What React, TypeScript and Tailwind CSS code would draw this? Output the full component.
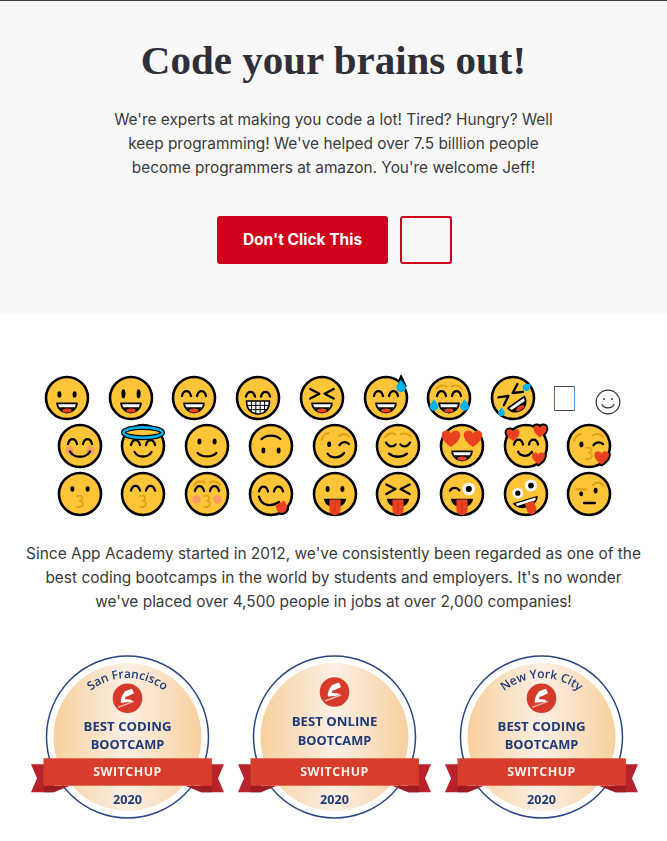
import React from 'react';

const FACE = '#FFC538';
const BROW = '#DF9F14';
const TONGUE = '#EA4220';
const CYAN = '#00B2EA';
const BLUSH = '#F79C68';
const NAVY = '#1E3A78';

const line = { fill: 'none', stroke: '#000', strokeWidth: 2.3, strokeLinecap: 'round' as const, strokeLinejoin: 'round' as const };
const brow = { fill: 'none', stroke: BROW, strokeWidth: 1.9, strokeLinecap: 'round' as const };

const HEART = 'M0 4.6C-6.5 .6-6.4-4.6-2.8-4.8-1.2-4.9-.3-3.9 0-3 .3-3.9 1.2-4.9 2.8-4.8 6.4-4.6 6.5 .6 0 4.6Z';

// emoji are drawn in px around the centre of a 48x48 box
const Emoji: React.FC<{ behind?: React.ReactNode; children?: React.ReactNode }> = ({ behind, children }) => (
  <div className="flex h-12 w-[63.7px] shrink-0 items-center justify-center">
    <svg width="48" height="48" viewBox="-24 -24 48 48" className="overflow-visible">
      {behind}
      <circle r="21" fill={FACE} stroke="#000" strokeWidth="2.6" />
      {children}
    </svg>
  </div>
);

const OpenMouth = () => (
  <g>
    <path d="M-10.8 4.6H10.8C10.8 11 5.6 15.4 0 15.4S-10.8 11-10.8 4.6Z" fill="#000" />
    <path d="M-8.8 6.2H8.8L8 9.2H-8Z" fill="#fff" />
    <ellipse cy="12.4" rx="4.6" ry="2" fill={TONGUE} />
  </g>
);

const TongueMouth = () => (
  <g>
    <path d="M-11 4.8H11C11 9 7 13.4 0 13.4S-11 9-11 4.8Z" fill="#000" />
    <path d="M-5.6 5.5H5.6V15.5C5.6 19 3 21 0 21S-5.6 19-5.6 15.5Z" fill={TONGUE} />
    <path d="M0 7V18" stroke="#C9320F" strokeWidth="1" />
  </g>
);

const ArcEyes = ({ y = -2 }: { y?: number }) => (
  <g {...line}>
    <path d={`M-12 ${y}C-10.5 ${y - 6.4}-4.5 ${y - 6.4}-3 ${y}`} />
    <path d={`M3 ${y}C4.5 ${y - 6.4} 10.5 ${y - 6.4} 12 ${y}`} />
  </g>
);

const XEyes = () => (
  <g {...line}>
    <path d="M-11.7-9-2.6-4.3-11.7 .6" />
    <path d="M11.7-9 2.6-4.3 11.7 .6" />
  </g>
);

const DotEyes = ({ y = -4.6, ry = 3, x = 7.6 }: { y?: number; ry?: number; x?: number }) => (
  <g>
    <ellipse cx={-x} cy={y} rx="2" ry={ry} />
    <ellipse cx={x} cy={y} rx="2" ry={ry} />
  </g>
);

const Brows = () => (
  <g {...brow}>
    <path d="M-13-9C-10-13-5-13.5-2.5-11.5" />
    <path d="M2.5-11.5C5-13.5 10-13 13-9" />
  </g>
);

const Smile = () => <path {...line} d="M-10 5.5C-6 12.5 6 12.5 10 5.5" />;
const Kiss = () => (
  <path d="M-3 2C3 .6 4 5.5-.4 7 4.4 7.4 4.6 13.6-3 13" fill="none" stroke={BROW} strokeWidth="1.7" strokeLinecap="round" strokeLinejoin="round" />
);
const Blush = ({ y = 5 }: { y?: number }) => (
  <g fill={BLUSH}>
    <circle cx="-10.5" cy={y} r="4.2" />
    <circle cx="10.5" cy={y} r="4.2" />
  </g>
);
const Heart = ({ x, y, s }: { x: number; y: number; s: number }) => (
  <path d={HEART} fill={TONGUE} transform={`translate(${x} ${y}) scale(${s})`} />
);
const HeartBack = ({ x, y, s }: { x: number; y: number; s: number }) => (
  <path d={HEART} fill="#000" stroke="#000" strokeWidth={3.6 / s} strokeLinejoin="round" transform={`translate(${x} ${y}) scale(${s})`} />
);
const Tear = ({ x, y, r = 4.6 }: { x: number; y: number; r?: number }) => (
  <path d={`M${x} ${y - r * 1.5}C${x + r * 0.5} ${y - r * 0.6} ${x + r} ${y - r * 0.3} ${x + r} ${y + r * 0.2}A${r} ${r} 0 0 1 ${x - r} ${y + r * 0.2}C${x - r} ${y - r * 0.3} ${x - r * 0.5} ${y - r * 0.6} ${x} ${y - r * 1.5}Z`} fill={CYAN} />
);
const GooglyEye = ({ x, y, r }: { x: number; y: number; r: number }) => (
  <g>
    <circle cx={x} cy={y} r={r} fill="#fff" />
    <circle cx={x} cy={y} r={r * 0.48} />
  </g>
);

const rowOne = [
  <Emoji key="grin"><DotEyes y={-3.6} ry={3.2} /><OpenMouth /></Emoji>,
  <Emoji key="smiley"><DotEyes y={-4.2} ry={4.6} /><OpenMouth /></Emoji>,
  <Emoji key="smile"><ArcEyes /><OpenMouth /></Emoji>,
  <Emoji key="beam">
    <ArcEyes y={-1.4} />
    <path d="M-11.4 3H11.4C11.6 11 6.8 16 0 16S-11.6 11-11.4 3Z" fill="#fff" stroke="#000" strokeWidth="1.7" />
    <path d="M-11 7.4H11M-10 11.6H10M-6.6 3V15M-2.2 3V16M2.2 3V16M6.6 3V15" stroke="#000" strokeWidth="1" />
  </Emoji>,
  <Emoji key="squint"><XEyes /><OpenMouth /></Emoji>,
  <Emoji key="sweat" behind={<path d="M15-22.6 20-12H11Z" fill="#000" stroke="#000" strokeWidth="1.5" strokeLinejoin="round" />}>
    <ArcEyes /><OpenMouth /><Tear x={15} y={-11.5} r={4.8} />
  </Emoji>,
  <Emoji key="joy">
    <Brows /><ArcEyes /><OpenMouth /><Tear x={-15} y={7.5} r={4.4} /><Tear x={15.5} y={7.5} r={4.4} />
  </Emoji>,
  <Emoji key="rofl">
    <g transform="rotate(-35)">
      <XEyes /><OpenMouth />
    </g>
    <g transform="rotate(55 14 -11)"><Tear x={14} y={-11} r={3.6} /></g>
    <Tear x={-11.5} y={14} r={3.4} />
  </Emoji>,
];

const rowTwo = [
  <Emoji key="relaxed"><Blush y={4.4} /><ArcEyes /><Smile /></Emoji>,
  <Emoji key="halo">
    <ArcEyes y={-1} /><path {...line} d="M-8.5 6C-5 12 5 12 8.5 6" />
    <ellipse cy="-13.4" rx="19.6" ry="5.2" fill={FACE} stroke="#000" strokeWidth="5" />
    <ellipse cy="-13.4" rx="19.6" ry="5.2" fill="none" stroke={CYAN} strokeWidth="2.6" />
  </Emoji>,
  <Emoji key="slight"><DotEyes /><path {...line} d="M-9.4 7C-5 11.6 5 11.6 9.4 7" /></Emoji>,
  <Emoji key="upside"><g transform="rotate(180)"><DotEyes /><path {...line} d="M-9.4 7C-5 11.6 5 11.6 9.4 7" /></g></Emoji>,
  <Emoji key="wink">
    <g {...brow}>
      <path d="M-13.5-6C-12-10-10-12.6-6.5-13" />
      <path d="M4-10C7-13 11-12.6 14-9.5" />
    </g>
    <ellipse cx="-5.8" cy="-1.8" rx="2" ry="2.8" />
    <path {...line} d="M4.5-1C7-4.6 11-4.6 14-2" />
    <path {...line} d="M-7.4 7.6C-4 12.6 5 12.6 9 7" />
  </Emoji>,
  <Emoji key="relieved">
    <Brows />
    <g {...line}>
      <path d="M-12-3.4C-9.6 1.4-4.8 1.4-2.4-1.6" />
      <path d="M2.4-1.6C4.8 1.4 9.6 1.4 12-3.4" />
    </g>
    <path {...line} d="M-9 7.6C-4 11.8 4 11.8 9 7.6" />
  </Emoji>,
  <Emoji key="heart-eyes">
    <OpenMouth />
    <Heart x={-11} y={-7} s={1.75} />
    <Heart x={11} y={-7} s={1.75} />
  </Emoji>,
  <Emoji
    key="hearts"
    behind={<g><HeartBack x={-13} y={-10.8} s={1.25} /><HeartBack x={14} y={-14.6} s={1.25} /><HeartBack x={12.4} y={12.6} s={1.25} /></g>}
  >
    <ArcEyes y={-1.5} />
    <path {...line} d="M-7.8 5.8C-7 7.6-5.6 9.6-1 9.8 3 9.8 4.4 8 6 6" />
    <Heart x={-13} y={-10.8} s={1.25} />
    <Heart x={14} y={-14.6} s={1.25} />
    <Heart x={12.4} y={12.6} s={1.25} />
  </Emoji>,
  <Emoji key="kiss-heart" behind={<HeartBack x={12.6} y={12} s={1.4} />}>
    <g {...brow}>
      <path d="M-15-5C-13.5-9.5-11-11.5-8-12" />
      <path d="M4-10.5C7-13 11-12.6 14-9" />
    </g>
    <ellipse cx="-7.6" cy="-1.6" rx="2" ry="2.8" />
    <path {...line} d="M4.5-.8C7-4.4 11-4.4 14-2" />
    <Kiss />
    <Heart x={12.6} y={12} s={1.4} />
  </Emoji>,
];

const rowThree = [
  <Emoji key="kissing"><DotEyes y={-5} ry={2.8} /><Kiss /></Emoji>,
  <Emoji key="kiss-smile"><ArcEyes y={-3.4} /><Kiss /></Emoji>,
  <Emoji key="kiss-closed"><Brows /><ArcEyes y={-3} /><Blush y={5.4} /><Kiss /></Emoji>,
  <Emoji key="yum" behind={<path d="M4 13 12 5 17 12C18 19 11 22 7 18.5Z" fill="#000" stroke="#000" strokeWidth="2" strokeLinejoin="round" />}>
    <ArcEyes y={-2.6} />
    <path {...line} d="M-12 2.6C-10 11-1 14 8 8" />
    <path d="M4.4 11.5 13 6.5C15.5 9.4 16.4 12 15.6 15.5 14 19 10 20 7.6 18 5.6 16.5 4.8 14 4.4 11.5Z" fill={TONGUE} />
  </Emoji>,
  <Emoji key="tongue"><DotEyes y={-5} ry={3} x={7.4} /><TongueMouth /></Emoji>,
  <Emoji key="tongue-squint"><g transform="translate(0 -.6)"><XEyes /></g><TongueMouth /></Emoji>,
  <Emoji key="tongue-wink">
    <path {...line} d="M-12-3.4C-10-7-5-7-2.6-3.6" />
    <GooglyEye x={6.8} y={-5} r={6.3} />
    <TongueMouth />
  </Emoji>,
  <Emoji key="zany">
    <GooglyEye x={-8.2} y={-.8} r={5.4} />
    <GooglyEye x={5} y={-8.4} r={6} />
    <g transform="rotate(-17 0 8)">
      <path d="M-13 5.4H13C12 10 7 13.6 0 13.6S-12 10-13 5.4Z" fill="#000" />
      <path d="M-10.4 6.6H10.4L9.6 9.2H-9.6Z" fill="#fff" />
      <path d="M-1.6 9.4H8V15C8 19 5.6 21.6 3 21.6S-1.6 19-1.6 15Z" fill={TONGUE} />
    </g>
  </Emoji>,
  <Emoji key="raised">
    <path {...brow} strokeWidth="2.1" d="M4-9C7-12.4 11-12.4 14.4-8.6" />
    <path fill="none" stroke={BROW} strokeWidth="2.2" strokeLinecap="round" d="M-12.4-4.6H-3" />
    <ellipse cx="-7.8" cy="-.2" rx="2" ry="2.4" />
    <ellipse cx="6.6" cy="-3.4" rx="2" ry="2.8" />
    <path {...line} d="M-5 9H6" />
  </Emoji>,
];

const OutlineSmile = () => (
  <svg width="28" height="28" viewBox="0 0 28 28" fill="none" stroke="#2a3338" strokeWidth="1.2" strokeLinecap="round">
    <circle cx="14" cy="14" r="11.8" />
    <path d="M8 16.5C10 21 18 21 20 16.5" />
    <circle cx="10" cy="11" r="0.9" fill="#2a3338" stroke="none" />
    <circle cx="18" cy="11" r="0.9" fill="#2a3338" stroke="none" />
  </svg>
);

const Badge: React.FC<{ id: string; city?: string; title: string; shifted?: boolean }> = ({ id, city, title, shifted }) => {
  const logoY = shifted ? 47 : 53.3;
  const lineOne = shifted ? 80.8 : 86.2;
  const lineTwo = shifted ? 99.7 : 103.8;
  return (
    <svg width="207" height="184" viewBox="0 0 207 184" className="shrink-0 blur-[0.35px]">
      <defs>
        <linearGradient id={`${id}-peach`} x1="0" x2="1" y1="0" y2="0">
          <stop offset="0" stopColor="#F9D09E" />
          <stop offset="0.5" stopColor="#FBEFE4" />
          <stop offset="1" stopColor="#F9D09E" />
        </linearGradient>
        <path id={`${id}-arc`} d="M44.5 92A59 59 0 0 1 162.5 92" />
      </defs>
      <circle cx="103.5" cy="92" r="81" fill="#fff" stroke="#2B4585" strokeWidth="1.5" />
      <circle cx="103.5" cy="92" r="74" fill={`url(#${id}-peach)`} />
      {city && (
        <text fontFamily="'Open Sans', sans-serif" fontSize="12" fontWeight="600" fill={NAVY}>
          <textPath href={`#${id}-arc`} startOffset="50%" textAnchor="middle">{city}</textPath>
        </text>
      )}
      <circle cx="103.5" cy={logoY} r="14.8" fill="#D63A2B" />
      <path d={`M101 ${logoY - 7}L108 ${logoY - 9.5} 110 ${logoY - 5}C107 ${logoY - 4} 105 ${logoY - 2} 101.5 ${logoY - 1.5}L101 ${logoY + 1}C104 ${logoY + 1} 108 ${logoY + 1} 109 ${logoY + 3.5}L97 ${logoY + 4.5}C96 ${logoY} 99 ${logoY - 4} 101 ${logoY - 7}Z`} fill="#fff" />
      <path d={`M94 ${logoY + 9}L110 ${logoY + 3}`} stroke="#F3B6A8" strokeWidth="1.4" />
      <g fontFamily="'Open Sans', sans-serif" fontWeight="700" textAnchor="middle" fill={NAVY}>
        <text x="103.5" y={lineOne} fontSize="13.2">{title}</text>
        <text x="103.5" y={lineTwo} fontSize="12.8">BOOTCAMP</text>
        <text x="103.5" y="159.3" fontSize="12.6">2020</text>
      </g>
      <path d="M7 119.3H30V147.3H7L13 133.2Z" fill="#B8222B" />
      <path d="M200 119.3H177V147.3H200L194 133.2Z" fill="#B8222B" />
      <path d="M19.5 140.7H46L30 147.3H19.5ZM187.9 140.7H161L177 147.3H187.9Z" fill="#9E1D22" />
      <rect x="19.5" y="113.3" width="168.4" height="27.4" fill="#D83D2C" />
      <text x="103.5" y="131.4" fontFamily="'Open Sans', sans-serif" fontWeight="700" fontSize="12.4" letterSpacing="0.5" textAnchor="middle" fill="#FBEFE8">SWITCHUP</text>
    </svg>
  );
};

export default function App() {
  return (
    <div className="bg-white font-['Inter',sans-serif] text-[#3a3a3a]">
      <section className="border-t border-[#3c3c44] bg-[#f8f8f8] pt-[35px] pb-[50px] text-center">
        <h1 className="font-['Liberation_Serif',serif] text-[41px] leading-[48px] font-bold text-[#2f2f38]">Code your brains out!</h1>
        <p className="mt-6 text-[15.4px] leading-6 whitespace-nowrap">
          We're experts at making you code a lot! Tired? Hungry? Well<br />
          keep programming! We've helped over 7.5 billlion people<br />
          become programmers at amazon. You're welcome Jeff!
        </p>
        <div className="mt-9 flex justify-center gap-3 pl-[2px]">
          <button className="h-12 w-[171px] rounded-[3px] bg-[#d0021b] text-[15.5px] font-bold text-white">Don't Click This</button>
          <button aria-label="More" className="h-12 w-[52px] rounded-[3px] border-2 border-[#d0021b]" />
        </div>
      </section>

      <section className="pt-[60px] pb-3">
        <div className="flex justify-center">
          {rowOne}
          <div className="flex h-12 w-10 items-center justify-center">
            <div className="h-[25px] w-[21px] border border-[#3d4a55] border-r-[#4aa0e0] border-l-[#8a6a50]" />
          </div>
          <div className="flex h-12 w-[47px] items-center justify-center pt-2">
            <OutlineSmile />
          </div>
        </div>
        <div className="flex justify-center pl-[2px]">{rowTwo}</div>
        <div className="flex justify-center pl-[2px]">{rowThree}</div>

        <p className="mt-6 text-center text-[15.45px] leading-6 whitespace-nowrap">
          Since App Academy started in 2012, we've consistently been regarded as one of the<br />
          best coding bootcamps in the world by students and employers. It's no wonder<br />
          we've placed over 4,500 people in jobs at over 2,000 companies!
        </p>

        <div className="mt-[31px] flex justify-center pl-[2px]">
          <Badge id="sf" city="San Francisco" title="BEST CODING" />
          <Badge id="online" title="BEST ONLINE" shifted />
          <Badge id="nyc" city="New York City" title="BEST CODING" />
        </div>
      </section>
    </div>
  );
}
